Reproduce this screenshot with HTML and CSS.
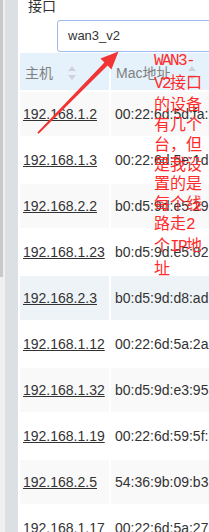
FILE: index.html
```html
<!DOCTYPE html>
<html lang="zh">
<head>
<meta charset="utf-8">
<link rel="stylesheet" href="styles.css">
</head>
<body>
<div class="page">
  <div class="rail-a"><div class="thumb"></div></div>
  <div class="rail-b"></div>
  <div class="main">
    <div class="label">接口</div>
    <div class="input">wan3_v2</div>
    <table class="grid">
      <thead>
        <tr>
          <th class="c1">主机<svg class="sort" width="8" height="14" viewBox="0 0 8 14"><path d="M4 0 L8 5 L0 5 Z M4 14 L8 9 L0 9 Z" fill="#cdd3d9"/></svg></th>
          <th class="c2">Mac地址<svg class="sort s2" width="8" height="14" viewBox="0 0 8 14"><path d="M4 0 L8 5 L0 5 Z M4 14 L8 9 L0 9 Z" fill="#cdd3d9"/></svg></th>
        </tr>
      </thead>
      <tbody>
        <tr class="odd"><td><span class="ip">192.168.1.2</span></td><td>00:22:6d:5d:fa:1e</td></tr>
        <tr><td><span class="ip">192.168.1.3</span></td><td>00:22:6d:5e:1d:2a</td></tr>
        <tr class="odd"><td><span class="ip">192.168.2.2</span></td><td>b0:d5:9d:e5:29:4c</td></tr>
        <tr><td><span class="ip">192.168.1.23</span></td><td>b0:d5:9d:e5:82:1a</td></tr>
        <tr class="hover"><td><span class="ip">192.168.2.3</span></td><td>b0:d5:9d:d8:ad:3f</td></tr>
        <tr><td><span class="ip">192.168.1.12</span></td><td>00:22:6d:5a:2a:4b</td></tr>
        <tr class="odd"><td><span class="ip">192.168.1.32</span></td><td>b0:d5:9d:e3:95:6c</td></tr>
        <tr><td><span class="ip">192.168.1.19</span></td><td>00:22:6d:59:5f:9a</td></tr>
        <tr class="odd"><td><span class="ip">192.168.2.5</span></td><td>54:36:9b:09:b3:7e</td></tr>
        <tr><td><span class="ip">192.168.1.17</span></td><td>00:22:6d:5a:27:1c</td></tr>
      </tbody>
    </table>
  </div>
  <svg class="arrow" width="209" height="532" viewBox="0 0 209 532">
    <polygon points="37.3,132.4 104.4,62.4 100.5,58.6 118.5,51.5 111.4,69.5 107.6,65.6 38.7,133.8" fill="#f23434"/>
  </svg>
  <div class="note"><span class="lat">WAN3-V2</span>接口的设备有几个台，但是我设置的是每个线路走<span class="lat">2</span>个<span class="lat">IP</span>地址</div>
</div>
</body>
</html>
```
FILE: styles.css
```css
html, body {
  margin: 0;
  padding: 0;
  background: #ffffff;
}
body {
  width: 209px;
  height: 532px;
  overflow: hidden;
  font-family: "Liberation Sans", "Noto Sans CJK SC", sans-serif;
  color: #333333;
}
.page {
  position: relative;
  display: flex;
  width: 209px;
  height: 532px;
  overflow: hidden;
}
.rail-a {
  width: 5px;
  flex: none;
  background: #f0f0f0;
}
.thumb {
  width: 3px;
  height: 277px;
  background: #c9c9c9;
}
.rail-b {
  width: 13px;
  flex: none;
  background: #dcdfe3;
}
.main {
  flex: 1;
  min-width: 0;
  overflow: hidden;
}
.label {
  margin-top: -2px;
  padding-left: 10px;
  font-family: "Noto Sans CJK SC", sans-serif;
  font-size: 14px;
  line-height: 14px;
  color: #333;
}
.input {
  box-sizing: border-box;
  margin-top: 8px;
  margin-left: 39px;
  width: 220px;
  height: 32px;
  border: 1.5px solid #9db9ee;
  border-radius: 3px;
  padding-left: 10px;
  font-size: 13px;
  line-height: 29px;
  color: #333;
}
.grid {
  margin-top: -1px;
  border-collapse: separate;
  border-spacing: 2px;
  width: 260px;
  table-layout: fixed;
  font-size: 14px;
}
.grid th {
  height: 37px;
  padding: 0;
  background: #e5f1fb;
  color: #808080;
  font-weight: normal;
  text-align: left;
  vertical-align: middle;
  white-space: nowrap;
}
.grid th.c1 {
  width: 89px;
  padding-left: 5px;
  box-sizing: border-box;
}
.grid th.c2 {
  padding-left: 5px;
}
.sort {
  vertical-align: -2px;
  margin-left: 15px;
}
.sort.s2 {
  margin-left: 18px;
}
.grid td {
  height: 44px;
  padding: 0 0 0 4px;
  white-space: nowrap;
  overflow: hidden;
  vertical-align: middle;
}
.grid td:first-child {
  padding-left: 3px;
}
.grid tr.odd td {
  background: #f9f9f9;
}
.grid tr.hover td {
  background: #eef3f7;
}
.ip {
  text-decoration: underline;
  color: #333;
}
.arrow {
  position: absolute;
  left: 0;
  top: 0;
  pointer-events: none;
}
.note {
  position: absolute;
  left: 154px;
  top: 49px;
  width: 49px;
  font-family: "Noto Sans CJK SC", sans-serif;
  font-size: 16px;
  line-height: 19.7px;
  color: #ff2b2b;
}
.note .lat {
  font-family: "Liberation Mono", monospace;
  letter-spacing: -1.6px;
}
```
